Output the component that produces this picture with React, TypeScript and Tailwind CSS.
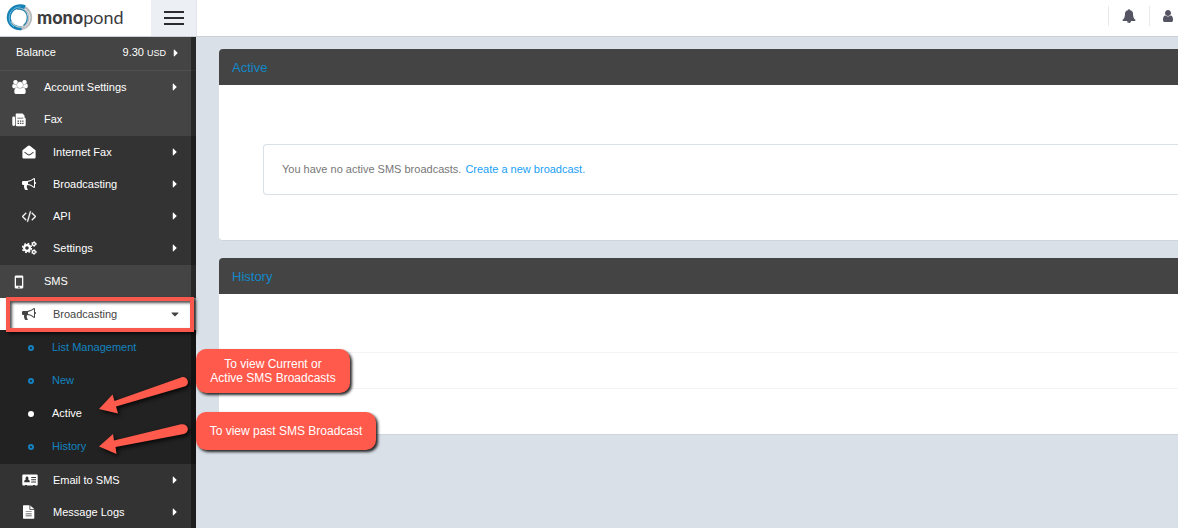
import type { ReactNode } from "react";
import { FaCaretRight, FaCaretDown } from "react-icons/fa";

function Glyph({ box = "0 0 1792 1792", className = "h-[14px] w-[14px]", children }: { box?: string; className?: string; children: ReactNode }) {
  return (
    <svg viewBox={box} className={className} fill="currentColor" aria-hidden="true">
      {children}
    </svg>
  );
}

const GroupIcon = () => (
  <Glyph box="0 0 2048 1792" className="h-[14px] w-4">
    <path stroke="currentColor" strokeWidth="60" d="M657 896q-162 5-265 128h-134q-82 0-138-40.5t-56-118.5q0-353 124-353 6 0 43.5 21t97.5 42.5 119 21.5q67 0 133-23-5 37-5 66 0 159 93 293zm1071 637q0 120-73 189.5t-194 69.5h-874q-121 0-194-69.5t-73-189.5q0-53 3.5-103.5t14-109 26.5-108.5 43-97.5 62-81 85.5-53.5 111.5-20q10 0 43 21.5t73 48 107 48 135 21.5 135-21.5 107-48 73-48 43-21.5q61 0 111.5 20t85.5 53.5 62 81 43 97.5 26.5 108.5 14 109 3.5 103.5zm-1024-1277q0 106-75 181t-181 75-181-75-75-181 75-181 181-75 181 75 75 181zm704 384q0 159-112.5 271.5t-271.5 112.5-271.5-112.5-112.5-271.5 112.5-271.5 271.5-112.5 271.5 112.5 112.5 271.5zm576 225q0 78-56 118.5t-138 40.5h-134q-103-123-265-128 93-134 93-293 0-29-5-66 66 23 133 23 59 0 119-21.5t97.5-42.5 43.5-21q124 0 124 353zm-128-609q0 106-75 181t-181 75-181-75-75-181 75-181 181-75 181 75 75 181z" />
  </Glyph>
);

const FaxIcon = () => (
  <Glyph box="0 0 14 14">
    <path fillRule="evenodd" d="M1.500 3.500H2A1 1 0 0 1 3 4.500V12.300A1.500 1.500 0 0 1 .3 11.800V4.700A1.200 1.200 0 0 1 1.500 3.500ZM4.500 .5H10.500L12.500 2.500V4.600A1.500 1.500 0 0 1 13.700 6.200V11.800A1.500 1.500 0 0 1 12.200 13.300H5A1.400 1.400 0 0 1 3.700 12V1.200A.7 .7 0 0 1 4.500 .5ZM5.200 4.700V5.500H11.300V4.700ZM5.500 7.500V8.700H7V7.500ZM7.900 7.500V8.700H9.300V7.500ZM10.200 7.500V8.700H11.500V7.500ZM5.500 9.700V10.900H7V9.700ZM7.900 9.700V10.900H9.300V9.700ZM10.200 9.700V10.900H11.500V9.700Z" />
  </Glyph>
);

const EnvelopeIcon = () => (
  <Glyph box="0 0 14 14">
    <path fillRule="evenodd" d="M.4 5.200C2 3.800 4 2.500 5.500 1.200C6.500 .4 7.500 .4 8.500 1.200C10 2.500 12 3.800 13.600 5.200V12.300A1.200 1.200 0 0 1 12.400 13.500H1.600A1.200 1.200 0 0 1 .4 12.300ZM2.300 7.400L5.300 9.700C6.500 10.600 7.500 10.600 8.700 9.700L11.700 7.400L11.300 6.800L8.200 9C7.400 9.600 6.600 9.600 5.800 9L2.700 6.800Z" />
  </Glyph>
);

const BullhornIcon = () => (
  <Glyph>
    <path d="M1664 640q53 0 90.500 37.500t37.500 90.500-37.500 90.500-90.500 37.500v384q0 52-38 90t-90 38q-417-347-812-380-58 19-91 66t-31 100.500 40 92.500q-20 33-23 65.500t6 58 33.500 55 48 50 61.500 50.500q-29 58-111.500 83t-168.500 11.500-132-55.500q-7-23-29.500-87.500t-32-94.500-23-89-15-101 3.500-98.500 22-110.500h-122q-66 0-113-47t-47-113v-192q0-66 47-113t113-47h480q435 0 896-384 52 0 90 38t38 90v384zm-128 604v-954q-394 302-768 343v270q377 42 768 341z" />
  </Glyph>
);

const CodeIcon = () => (
  <Glyph>
    <path stroke="currentColor" strokeWidth="40" d="M553 1399l-50 50q-10 10-23 10t-23-10l-466-466q-10-10-10-23t10-23l466-466q10-10 23-10t23 10l50 50q10 10 10 23t-10 23l-393 393 393 393q10 10 10 23t-10 23zm591-1067l-373 1291q-4 13-15.500 19.500t-23.500 2.500l-62-17q-13-4-19.500-15.500t-2.500-24.500l373-1291q4-13 15.500-19.500t23.500-2.500l62 17q13 4 19.500 15.500t2.500 24.500zm657 651l-466 466q-10 10-23 10t-23-10l-50-50q-10-10-10-23t10-23l393-393-393-393q-10-10-10-23t10-23l50-50q10-10 23-10t23 10l466 466q10 10 10 23t-10 23z" />
  </Glyph>
);

const CogsIcon = () => (
  <Glyph box="0 0 15 14" className="h-[14px] w-[15px]">
    <g fill="none" stroke="currentColor">
      <circle cx="5" cy="7" r="2.900" strokeWidth="2.200" />
      <circle cx="5" cy="7" r="4.500" strokeWidth="1.400" strokeDasharray="1.770" />
      <circle cx="11.900" cy="3" r="1.500" strokeWidth="1.300" />
      <circle cx="11.900" cy="3" r="2.400" strokeWidth=".8" strokeDasharray="1.250" />
      <circle cx="11.900" cy="11" r="1.500" strokeWidth="1.300" />
      <circle cx="11.900" cy="11" r="2.400" strokeWidth=".8" strokeDasharray="1.250" />
    </g>
  </Glyph>
);

const MobileIcon = () => (
  <Glyph box="0 0 14 14">
    <path fillRule="evenodd" d="M4 .5H10A1.300 1.300 0 0 1 11.300 1.800V12.200A1.300 1.300 0 0 1 10 13.500H4A1.300 1.300 0 0 1 2.700 12.200V1.800A1.300 1.300 0 0 1 4 .5ZM4 2.700V10.700H10V2.700ZM7 11.400A.8 .8 0 1 0 7 13A.8 .8 0 1 0 7 11.400Z" />
  </Glyph>
);

const CardIcon = () => (
  <Glyph box="0 0 16 14" className="h-[14px] w-4">
    <path fillRule="evenodd" d="M1.300 1.500H14.700A1 1 0 0 1 15.700 2.500V11.500A1 1 0 0 1 14.700 12.500H13V12H11V12.500H5V12H3V12.500H1.300A1 1 0 0 1 .3 11.500V2.500A1 1 0 0 1 1.300 1.500ZM5 3.500A1.600 1.800 0 0 0 4 6.600C2.800 6.800 2.200 7.800 2.200 9.300H7.800C7.800 7.800 7.200 6.800 6 6.600A1.600 1.800 0 0 0 5 3.500ZM9.200 4V5H14V4ZM9.200 6.200V7.200H14V6.200ZM9.200 8.400V9.400H14V8.400Z" />
  </Glyph>
);

const FileIcon = () => (
  <Glyph box="0 0 14 14">
    <path fillRule="evenodd" d="M1.700 .3H7.500V4.700H12.300V13A.7 .7 0 0 1 11.600 13.700H1.700A.7 .7 0 0 1 1 13V1A.7 .7 0 0 1 1.700 .3ZM8.300 .4L12.200 3.900H8.300ZM3.700 6.400V7.100H9.700V6.400ZM3.700 8.500V9.200H9.700V8.500ZM3.700 10.600V11.300H9.700V10.600Z" />
  </Glyph>
);

const BellIcon = () => (
  <Glyph>
    <path d="M912 1696q0-16-16-16-59 0-101.500-42.500t-42.500-101.500q0-16-16-16t-16 16q0 73 51.500 124.500t124.500 51.500q16 0 16-16zm816-288q0 52-38 90t-90 38h-448q0 106-75 181t-181 75-181-75-75-181h-448q-52 0-90-38t-38-90q50-42 91-88t85-119.500 74.500-158.500 50-206 19.500-260q0-152 117-282.500t307-158.500q-8-19-8-39 0-40 28-68t68-28 68 28 28 68q0 20-8 39 190 28 307 158.500t117 282.500q0 139 19.500 260t50 206 74.500 158.500 85 119.500 91 88z" />
  </Glyph>
);

const UserIcon = () => (
  <Glyph>
    <path d="M1536 1399q0 109-62.500 187t-150.500 78h-854q-88 0-150.500-78t-62.500-187q0-85 8.500-160.500t31.500-152 58.500-131 94-89 134.500-34.500q131 128 313 128t313-128q76 0 134.500 34.500t94 89 58.500 131 31.500 152 8.500 160.500zm-256-887q0 159-112.500 271.500t-271.500 112.500-271.500-112.500-112.500-271.500 112.500-271.500 271.500-112.500 271.500 112.500 112.500 271.500z" />
  </Glyph>
);

function Logo() {
  return (
    <a href="#" className="flex w-[151px] items-center gap-1 pb-[2px] pl-[6px] text-[#3c3c3e]">
      <svg viewBox="0 0 27 27" className="h-[27px] w-[27px] shrink-0" fill="none" aria-hidden="true">
        <circle cx="13.500" cy="13.500" r="10.700" stroke="#b9bcbf" strokeWidth="4" />
        <path d="M15 3.900C21 4.800 24 9 23.800 14C23.500 18.500 21.500 21.500 18.500 23.500" stroke="#e6e8ea" strokeWidth=".9" />
        <path d="M19 3.200C13.500 1 7 3 4 8.500C1.500 13.500 3 19.500 8 22.500C10.500 24 13 24.400 15.500 24.200" stroke="#1582b6" strokeWidth="4" />
        <path d="M14.500 3C8.500 2.800 3.500 7.500 3.200 13.500C3.200 17.500 5 20.500 8 22.800" stroke="#6dbde0" strokeWidth="1" />
        <path d="M11 5.200C17 4.200 21 8 21.300 13C21.400 16.500 20 19.500 17.500 21.500" stroke="#2b86ae" strokeWidth="1.300" />
        <path d="M5.300 17.500C8 22.500 13 24 17.500 22.500" stroke="#d0d3d5" strokeWidth="1.200" />
      </svg>
      <span className="font-[Lato,sans-serif] text-[18px] leading-6">
        <span className="font-black">mono</span>pond
      </span>
    </a>
  );
}

function NavRow({ icon, label, sub, open, caret = true, className = "h-8" }: { icon: ReactNode; label: string; sub?: boolean; open?: boolean; caret?: boolean; className?: string }) {
  return (
    <a href="#" className={`flex items-center pr-4 ${sub ? "pl-[22px]" : "pl-3"} ${open ? "bg-white text-[#444]" : "text-white"} ${className}`}>
      <span className={`flex shrink-0 ${sub ? "w-[31px]" : "w-8"}`}>{icon}</span>
      <span className="flex-1">{label}</span>
      {caret && <span className="flex w-[10px] justify-center">{open ? <FaCaretDown size={12} /> : <FaCaretRight size={12} />}</span>}
    </a>
  );
}

function SubLink({ label, active }: { label: string; active?: boolean }) {
  return (
    <a href="#" className={`flex h-[33px] items-center pl-7 ${active ? "text-white" : "text-[#1482c0]"}`}>
      <span className={`mr-[18px] h-[6px] w-[6px] rounded-full border-2 border-current ${active ? "bg-white" : ""}`} />
      {label}
    </a>
  );
}

function Panel({ title, children }: { title: string; children: ReactNode }) {
  return (
    <section className="overflow-hidden rounded-l border-b border-[#cdd5dd] bg-white">
      <h2 className="flex h-9 items-center bg-[#444] pt-px pl-[13px] text-[13px] text-[#1188c8]">{title}</h2>
      {children}
    </section>
  );
}

function Arrow({ className, d }: { className: string; d: string }) {
  return (
    <svg viewBox="0 0 92 40" className={`absolute h-10 w-[92px] drop-shadow-[2px_2px_2px_rgba(0,0,0,0.8)] ${className}`} aria-hidden="true">
      <path d={d} fill="#ff5a4c" />
    </svg>
  );
}

export default function App() {
  return (
    <div className="relative flex h-screen flex-col overflow-hidden bg-[#d9e0e8] font-['Liberation_Sans',Arial,sans-serif] text-[11px]">
      <header className="flex h-[37px] shrink-0 border-b border-[#cbd0d6] bg-white">
        <Logo />
        <button aria-label="Toggle menu" className="flex w-[46px] flex-col items-center justify-center gap-1 border-r border-[#e1e5ea] bg-[#ecf0f5]">
          <span className="h-[2px] w-5 bg-[#2a2a30]" />
          <span className="h-[2px] w-5 bg-[#2a2a30]" />
          <span className="h-[2px] w-5 bg-[#2a2a30]" />
        </button>
        <div className="ml-auto flex items-center pb-1 text-[#555463]">
          <button aria-label="Notifications" className="flex h-5 w-[42px] items-center justify-center border-x border-[#e8e9ec]">
            <BellIcon />
          </button>
          <button aria-label="Account" className="flex w-7 items-center pl-[11px]">
            <UserIcon />
          </button>
        </div>
      </header>

      <div className="flex min-h-0 flex-1">
        <nav className="relative w-[196px] shrink-0 overflow-hidden bg-[#333]">
          <a href="#" className="flex h-[34px] items-center border-b border-[#505050] bg-[#444] pr-[15px] pb-[2px] pl-4 text-white">
            <span className="flex-1">Balance</span>
            <span>9.30 <span className="text-[9px]">USD</span></span>
            <span className="ml-[5px] flex w-[10px] justify-center"><FaCaretRight size={12} /></span>
          </a>
          <div className="bg-[#444]">
            <NavRow icon={<GroupIcon />} label="Account Settings" />
            <NavRow icon={<FaxIcon />} label="Fax" caret={false} className="h-[33px]" />
          </div>
          <div className="pb-px">
            <NavRow sub icon={<EnvelopeIcon />} label="Internet Fax" />
            <NavRow sub icon={<BullhornIcon />} label="Broadcasting" />
            <NavRow sub icon={<CodeIcon />} label="API" />
            <NavRow sub icon={<CogsIcon />} label="Settings" />
          </div>
          <div className="bg-[#444]">
            <NavRow icon={<MobileIcon />} label="SMS" caret={false} className="h-[33px]" />
          </div>
          <NavRow sub open icon={<BullhornIcon />} label="Broadcasting" />
          <div className="bg-[#222] py-px">
            <SubLink label="List Management" />
            <SubLink label="New" />
            <SubLink label="Active" active />
            <SubLink label="History" />
          </div>
          <NavRow sub icon={<CardIcon />} label="Email to SMS" />
          <NavRow sub icon={<FileIcon />} label="Message Logs" />
          <div className="absolute inset-y-0 right-0 w-[5px] bg-black/40" />
        </nav>

        <main className="flex min-w-0 flex-1 flex-col gap-[17px] pt-3 pl-[23px]">
          <Panel title="Active">
            <div className="pt-[59px] pb-[45px] pl-11">
              <p className="flex h-[51px] items-center gap-1 rounded-l border border-r-0 border-[#d9e0e8] pl-[18px] text-[#777]">
                You have no active SMS broadcasts.
                <a href="#" className="text-[#1a9ff5]">Create a new broadcast.</a>
              </p>
            </div>
          </Panel>
          <Panel title="History">
            <div className="h-[59px] border-b border-[#f3f4f6]" />
            <div className="h-9 border-b border-[#f3f4f6]" />
            <div className="h-[45px]" />
          </Panel>
        </main>
      </div>

      <div className="absolute top-[297px] left-[6px] h-[35px] w-[188px] border-4 border-[#f9594c] shadow-[2px_2px_3px_rgba(0,0,0,0.7),inset_2px_2px_3px_rgba(0,0,0,0.7)]" />
      <Arrow className="top-[374px] left-[98px]" d="M1 35L14.500 20.500L16.500 27L83 3.400C86 2.300 89 4 89.700 6.800C90.400 9.400 89 11.800 86.500 12.600L18 32.500L20 39.500Z" />
      <Arrow className="top-[421px] left-[98px]" d="M1 25.500L15 13L16 19.500L83 3.300C86 2.600 89 4.200 89.700 7C90.300 9.700 88.700 12.200 86 12.900L17.500 26L18.500 33Z" />
      <div className="absolute top-[349px] left-[196px] flex h-11 w-[154px] items-center justify-center rounded-[10px] bg-[#ff5a4c] text-center text-[12px] leading-[14px] text-white shadow-[2px_2px_3px_rgba(0,0,0,0.85)]">
        To view Current or<br />Active SMS Broadcasts
      </div>
      <div className="absolute top-[412px] left-[196px] flex h-[38px] w-[180px] items-center justify-center rounded-[10px] bg-[#ff5a4c] text-[12px] text-white shadow-[2px_2px_3px_rgba(0,0,0,0.85)]">
        To view past SMS Broadcast
      </div>
    </div>
  );
}
